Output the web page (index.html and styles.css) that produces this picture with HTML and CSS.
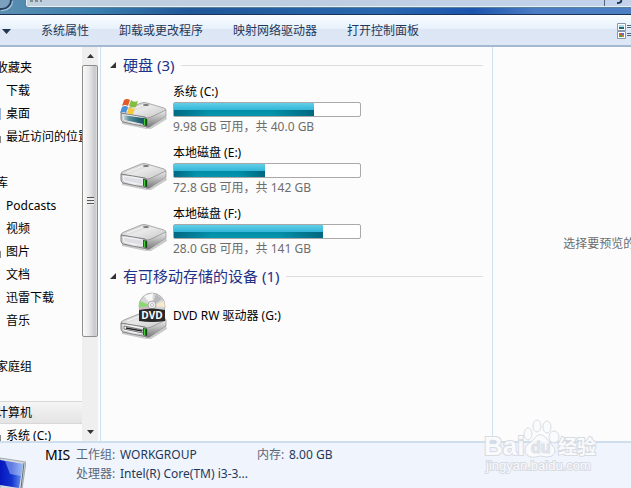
FILE: index.html
```html
<!DOCTYPE html>
<html lang="zh-CN">
<head>
<meta charset="utf-8">
<title>计算机</title>
<link rel="stylesheet" href="styles.css">
</head>
<body>
<svg class="defs" aria-hidden="true">
  <defs>
    <linearGradient id="top" x1="0" y1="0" x2="1" y2="1"><stop offset="0" stop-color="#b9b9b9"/><stop offset=".45" stop-color="#e9e9e9"/><stop offset="1" stop-color="#c4c4c4"/></linearGradient>
    <linearGradient id="front" x1="0" y1="0" x2="1" y2="0"><stop offset="0" stop-color="#c8c8cc"/><stop offset=".5" stop-color="#f0f0f4"/><stop offset="1" stop-color="#9b9b9f"/></linearGradient>
    <linearGradient id="side" x1="0" y1="0" x2="0" y2="1"><stop offset="0" stop-color="#eeeeee"/><stop offset="1" stop-color="#777777"/></linearGradient>
    <linearGradient id="teal" x1="0" y1="0" x2="1" y2="0"><stop offset="0" stop-color="#cfdde0"/><stop offset=".3" stop-color="#5c8f9c"/><stop offset="1" stop-color="#175564"/></linearGradient>
    <linearGradient id="screen" x1="0" y1="0" x2="1" y2="0"><stop offset="0" stop-color="#0516bd"/><stop offset=".5" stop-color="#1233d0"/><stop offset="1" stop-color="#6f9df0"/></linearGradient>
    <symbol id="drive" viewBox="0 0 48 30">
      <path d="M2 22 27 29Q29 29.500 31 28L46 17 47 20 31 30H26L2 25Z" fill="#000" opacity=".2"/>
      <path d="M1 14Q1 12 4 11L21 4Q24 3 27 4L44 9Q47 10 45 12L30 19Q27 20 24 19Z" fill="url(#top)" stroke="#8d8d8d" stroke-width=".7"/>
      <path d="M26 19Q29 19 31 18L46 11V17L30 28Q28 29 26 28Z" fill="url(#side)" stroke="#858585" stroke-width=".6"/>
      <path d="M1 14 25 18Q27 19 27 21V28L3 23Q1 22 1 20Z" fill="url(#front)" stroke="#777" stroke-width=".9"/>
      <path d="M3 16 23 19V25L4 21Z" fill="#dedee5" stroke="#fafafa" stroke-width=".8"/>
      <path d="M23 19 27 20V27L23 26Z" fill="#164b19"/><path d="M24.500 20V26" stroke="#41cf35" stroke-width="1.500"/>
      <ellipse cx="26" cy="6" rx="3" ry="1" fill="#777"/><path d="M7 12 23 6" stroke="#fff" opacity=".8"/>
    </symbol>
  </defs>
</svg>

<header class="titlebar">
  <button class="back" aria-label="前进"></button>
  <div class="address"><span class="crumb"></span><button class="refresh" aria-label="刷新"><svg viewBox="0 0 10 4" width="10" height="4"><path d="M6 0Q7 3 2 3" fill="none" stroke="#1e3654" stroke-width="2"/></svg></button></div>
</header>

<nav class="toolbar">
  <button class="organize" aria-label="组织"><svg viewBox="0 0 9 5" width="9" height="5"><path d="M0 0H9L4.500 5Z" fill="#1e3654"/></svg></button>
  <button>系统属性</button>
  <button>卸载或更改程序</button>
  <button>映射网络驱动器</button>
  <button>打开控制面板</button>
  <button class="view" aria-label="更改视图"><svg viewBox="0 0 14 16" width="14" height="16">
    <path d="M.5.500H8.500V7.500H.5ZM.5 8.500H8.500V15.500H.5Z" fill="#fff" stroke="#8798ad"/>
    <path d="M2 2H7V4H2Z" fill="#a5dcf0"/><path d="M2 4H7V6H2Z" fill="#236b69"/>
    <path d="M2 10H4V12H2Z" fill="#dc5b36"/><path d="M4 10H7V12H4Z" fill="#6868dc"/><path d="M2 12H5V14H2Z" fill="#50a532"/><path d="M5 12H7V14H5Z" fill="#b98536"/>
    <path d="M10 2.500H14M10 4.500H14M10 10.500H14M10 12.500H14" stroke="#53657e"/>
  </svg></button>
</nav>

<main class="panes">
  <aside class="sidebar">
    <ul class="tree">
      <li class="root">收藏夹</li>
      <li>下载</li>
      <li class="mark-desktop">桌面</li>
      <li class="mark-recent">最近访问的位置</li>
      <li></li>
      <li class="root">库</li>
      <li>Podcasts</li>
      <li>视频</li>
      <li class="mark-recent">图片</li>
      <li>文档</li>
      <li>迅雷下载</li>
      <li>音乐</li>
      <li></li>
      <li class="root">家庭组</li>
      <li></li>
      <li class="root selected">计算机</li>
      <li class="mark-recent">系统 (C:)</li>
    </ul>
    <div class="scrollbar">
      <button aria-label="向上滚动"><svg viewBox="0 0 7 4" width="7" height="4"><path d="M0 4 3.500 0 7 4Z" fill="#333"/></svg></button>
      <div class="track"><div class="thumb"><i></i></div></div>
      <button aria-label="向下滚动"><svg viewBox="0 0 7 4" width="7" height="4"><path d="M0 0H7L3.500 4Z" fill="#333"/></svg></button>
    </div>
  </aside>

  <section class="content">
    <h2><svg viewBox="0 0 6 6" width="6" height="6"><path d="M6 0V6H0Z" fill="#333"/></svg>硬盘 (3)</h2>
    <article class="device">
      <svg class="icon" viewBox="0 0 48 30"><use href="#drive"/>
        <path d="M3 16 23 19V25L4 21Z" fill="url(#teal)"/>
        <path d="M4 1Q7 -1 10 1L8 7Q5 5 2 7Z" fill="#e45a2b"/><path d="M11 1Q14 4 18 2L16 8Q12 9 9 7Z" fill="#83bd43"/><path d="M2 8Q5 6 8 8L6 14Q3 12 0 14Z" fill="#4b91da"/><path d="M9 8Q12 11 15 9L13 15Q10 16 7 14Z" fill="#f8c83b"/>
      </svg>
      <div class="info"><h3>系统 (C:)</h3><div class="bar"><div class="fill" style="width:75%"></div></div><p>9.98 GB 可用，共 40.0 GB</p></div>
    </article>
    <article class="device">
      <svg class="icon" viewBox="0 0 48 30"><use href="#drive"/></svg>
      <div class="info"><h3>本地磁盘 (E:)</h3><div class="bar"><div class="fill" style="width:49%"></div></div><p>72.8 GB 可用，共 142 GB</p></div>
    </article>
    <article class="device">
      <svg class="icon" viewBox="0 0 48 30"><use href="#drive"/></svg>
      <div class="info"><h3>本地磁盘 (F:)</h3><div class="bar"><div class="fill" style="width:80%"></div></div><p>28.0 GB 可用，共 141 GB</p></div>
    </article>
    <h2><svg viewBox="0 0 6 6" width="6" height="6"><path d="M6 0V6H0Z" fill="#333"/></svg>有可移动存储的设备 (1)</h2>
    <article class="device optical">
      <svg class="icon" viewBox="0 0 48 48">
        <use href="#drive" y="17" width="48" height="30"/>
        <path d="M4 34 23 38V41L4 37Z" fill="#fff" stroke="#444" stroke-width=".7"/><path d="M6 36 22 39" stroke="#222" stroke-width="1.300"/>
        <circle cx="32" cy="14" r="13" fill="#d5d7d7" stroke="#9b9b9b" stroke-width=".7"/>
        <path d="M32 14 24 4 33 1Z" fill="#f8f8f8"/><path d="M32 14 20 9 19 16Z" fill="#8cd874"/><path d="M32 14 36 2 42 7Z" fill="#b8b8bb"/><path d="M32 14 44 9 45 15Z" fill="#f5eacd"/><path d="M32 14 22 18 20 16Z" fill="#dfa9cc"/>
        <circle cx="32" cy="13" r="4" fill="#ededed" stroke="#aaa"/><circle cx="32" cy="13" r="1.500" fill="#fff" stroke="#999" stroke-width=".6"/>
        <path d="M19 18Q32 15 45 18V29Q32 31 19 29Z" fill="#292929"/>
        <text x="32" y="27" text-anchor="middle" class="disc-label">DVD</text>
      </svg>
      <h3>DVD RW 驱动器 (G:)</h3>
    </article>
  </section>

  <aside class="preview"><p>选择要预览的文件。</p></aside>
</main>

<footer class="details">
  <svg class="computer" viewBox="0 0 26 32" width="26" height="32">
    <path d="M0 1 26 5 22 32H0Z" fill="#d5d9dd" stroke="#909aa6" stroke-width=".8"/>
    <path d="M0 3 23 7 19 31 0 28Z" fill="url(#screen)"/><path d="M5 4 23 7 21 19 10 17Z" fill="#dceaff" opacity=".4"/><path d="M24 6 21 31" stroke="#656e79"/>
  </svg>
  <strong>MIS</strong>
  <dl>
    <dt>工作组:</dt><dd>WORKGROUP</dd><dt>内存:</dt><dd>8.00 GB</dd>
    <dt>处理器:</dt><dd>Intel(R) Core(TM) i3-3...</dd>
  </dl>
</footer>

<svg class="watermark" viewBox="0 0 120 60" width="120" height="60">
  <g class="mark">
    <text x="2" y="35" class="brand">Bai</text>
    <ellipse cx="46" cy="14" rx="4" ry="6"/><ellipse cx="55" cy="6" rx="4" ry="6"/><ellipse cx="65" cy="7" rx="4" ry="6"/><ellipse cx="72" cy="17" rx="5" ry="6"/>
    <path d="M52 19Q58 10 65 19L70 25Q76 31 70 36Q66 38 58 36Q49 39 45 35Q41 30 45 25Z"/>
    <text x="49" y="33" class="du">du</text>
    <text x="76" y="34" class="cn">经验</text>
    <text x="4" y="50" class="site">jingyan.baidu.com</text>
  </g>
</svg>
</body>
</html>
```
FILE: styles.css
```css
* { box-sizing: border-box; }
body {
  margin: 0;
  height: 100vh;
  display: flex;
  flex-direction: column;
  overflow: hidden;
  position: relative;
  background: #fcfcfc;
  color: #000;
  font: 12px/16px "Noto Sans", "Noto Sans CJK SC", sans-serif;
}
h2, h3, p, ul, dl, dd { margin: 0; padding: 0; }
button { border: 0; padding: 0; background: none; font: inherit; color: inherit; }
svg { display: block; }
.defs { position: absolute; width: 0; height: 0; }

.titlebar {
  height: 15px;
  flex: none;
  display: flex;
  align-items: flex-start;
  gap: 14px;
  background: linear-gradient(90deg, #5c8fb1, #397fae 15%, #1f5798 30%, #2867ae 60%, #1c55ae 75%, #4c7cc4 85%, #4b7fc2);
  border-bottom: 1px solid #1b3356;
}
.back { width: 12px; height: 10px; border: 2px solid #28435f; border-width: 0 2px 2px 0; border-radius: 0 0 12px 0; background: #7ca1bf; box-shadow: 1px 1px #a9c7dc; }
.address {
  flex: 1;
  height: 7px;
  display: flex;
  justify-content: space-between;
  border: 1px solid #e5f0f7;
  border-top: 0;
  border-right: 0;
  border-radius: 0 0 0 2px;
  outline: 1px solid #5d7f9e;
  background: linear-gradient(90deg, #c1d0df, #becee2 50%, #c4d3ec);
}
.crumb { width: 12px; height: 2px; margin-left: 3px; background: repeating-linear-gradient(90deg, #838b93 0 3px, #c4ced8 3px 5px); }
.refresh { width: 27px; padding-left: 10px; border-left: 1px solid #53667c; display: flex; }

.toolbar {
  height: 32px;
  flex: none;
  display: flex;
  align-items: center;
  gap: 30px;
  padding: 2px 0 0 2px;
  color: #1e395b;
  background: linear-gradient(#fafdff, #e7f1fb 47%, #dce6f4 48%, #dde7f5);
  border-bottom: 2px solid #a5b8d1;
  white-space: nowrap;
}
.view { margin-left: auto; }

.panes { flex: 1; min-height: 0; display: flex; }
.sidebar { width: 101px; flex: none; display: flex; border-right: 1px solid #d0e0f2; }
.tree { flex: 1; min-width: 0; padding-top: 9px; list-style: none; overflow: hidden; }
.tree li { height: 23px; padding-left: 6px; line-height: 23px; white-space: nowrap; }
.tree .root { padding: 0; text-indent: -4px; }
.tree .mark-desktop { background: linear-gradient(#9eb3d8, #9eb3d8) 0 50% / 1px 12px no-repeat; }
.tree .mark-recent { background: linear-gradient(#888, #888) 0 70% / 1px 7px no-repeat; }
.tree .selected { background: linear-gradient(#f5f5f5, #e4e4e4); border-top: 1px solid #d7d7d7; border-bottom: 1px solid #d7d7d7; line-height: 21px; }
.scrollbar { width: 16px; margin-right: 2px; flex: none; display: flex; flex-direction: column; background: #efefef; }
.scrollbar button { height: 18px; display: grid; place-items: center; }
.track { flex: 1; }
.thumb {
  height: 76%;
  display: grid;
  place-items: center;
  border: 1px solid #8e8e8e;
  border-radius: 2px;
  background: linear-gradient(90deg, #fafafa, #e8e8e8 45%, #c6c8cc 85%, #dedede);
}
.thumb i { width: 7px; height: 8px; background: repeating-linear-gradient(#555 0 1px, #eee 1px 3px); }

.content { flex: 0 0 62%; min-width: 0; padding: 8px 9px 0 9px; }
.content h2 {
  display: flex;
  align-items: center;
  margin-bottom: 8px;
  font-size: 15px;
  line-height: 20px;
  font-weight: 400;
  color: #1e3287;
  white-space: nowrap;
}
.content h2 svg { margin-right: 7px; }
.content h2::after { content: ""; flex: 1; margin-left: 7px; border-top: 1px solid #dedede; }
.device { display: flex; align-items: flex-end; gap: 5px; margin: 0 0 7px 10px; }
.device .icon { width: 48px; flex: none; margin-bottom: 8px; overflow: visible; }
.device h3 { font-size: 12px; font-weight: 400; line-height: 18px; }
.device p { color: #6d6d6d; white-space: nowrap; line-height: 20px; }
.device.optical { align-items: center; margin-top: -2px; }
.optical .icon { margin: 0; }
.info { width: 188px; }
.bar { height: 15px; margin-top: 1px; border: 1px solid #a9a9a9; border-radius: 2px; background: #fff; }
.fill {
  height: 100%;
  background:
    linear-gradient(90deg, #004f6a99, #0090a900 25%, #0090a900 70%, #004a6299) 0 100% / 100% 50% no-repeat,
    linear-gradient(#63cee8, #35b8d9 50%, #008ca6 51%, #0795ae);
}
.disc-label { font: 700 10px "Open Sans", sans-serif; fill: #fff; }

.preview { flex: 1; min-width: 0; display: flex; align-items: center; padding-left: 70px; border-left: 1px solid #d0e0f2; color: #6d6d6d; white-space: nowrap; overflow: hidden; }

.details {
  height: 47px;
  flex: none;
  display: flex;
  align-items: flex-start;
  border-top: 2px solid #cfdeed;
  background: #f0f4fc;
  line-height: 19px;
}
.computer { margin-top: 14px; }
.details strong { margin-left: 19px; width: 31px; padding-top: 2px; font-size: 14px; font-weight: 400; }
.details dl { display: grid; grid-template-columns: 44px 137px 32px auto; padding-top: 2px; white-space: nowrap; }
.details dt { color: #5a6779; }
.details dd { color: #1e395b; }

.watermark { position: absolute; right: 29px; bottom: 8px; overflow: visible; }
.mark { fill: #fafbfd; stroke: #d5d9e0; stroke-width: 1px; opacity: .9; }
.mark text { paint-order: stroke; }
.brand { font: 700 26px "Liberation Sans", sans-serif; stroke-width: 2px; }
.du { font: 700 16px "Liberation Sans", sans-serif; fill: #dfe3ea; }
.cn { font: 700 19px "Noto Sans CJK SC", sans-serif; stroke-width: 2px; }
.site { font: 13px "Liberation Sans", sans-serif; stroke-width: 2px; }
```
